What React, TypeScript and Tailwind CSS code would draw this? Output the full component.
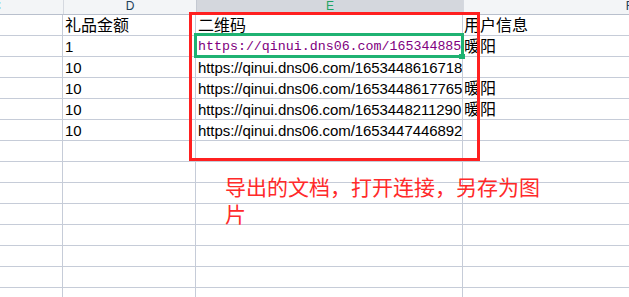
const rows: [string, string, string][] = [
  ['礼品金额', '二维码', '用户信息'],
  ['1', 'https://qinui.dns06.com/165344885', '暖阳'],
  ['10', 'https://qinui.dns06.com/1653448616718', ''],
  ['10', 'https://qinui.dns06.com/1653448617765', '暖阳'],
  ['10', 'https://qinui.dns06.com/1653448211290', '暖阳'],
  ['10', 'https://qinui.dns06.com/1653447446892', ''],
  ['', '', ''],
  ['', '', ''],
  ['', '', ''],
  ['', '', ''],
  ['', '', ''],
  ['', '', ''],
  ['', '', ''],
  ['', '', ''],
];

const isCjk = (s: string) => /[\u4e00-\u9fff]/.test(s);

export default function App() {
  return (
    <div
      className="relative w-[629px] h-[297px] overflow-hidden bg-white text-black"
      style={{ fontFamily: '"Liberation Sans", "Noto Sans CJK SC", sans-serif' }}
    >
      {/* column headers */}
      <div className="flex h-[15px] border-b border-[#b9c0cd] ml-[-70px] text-[12px] leading-[12px]">
        <div className="w-[133px] shrink-0 bg-[#f3f5f7] flex justify-center items-end pb-[2px] text-[#19a8c8]">C</div>
        <div className="w-[133px] shrink-0 bg-[#f3f5f7] border-l border-[#d5d9e0] flex justify-center items-end pb-[2px] text-[#20405a]">D</div>
        <div className="w-[267px] shrink-0 bg-[#d4d7dd] border-l border-[#c4c9d2] flex justify-center items-end pb-[2px] text-[#1fa463]">E</div>
        <div className="w-[332px] shrink-0 bg-[#f3f5f7] border-l border-[#d5d9e0] flex justify-center items-end pb-[2px] text-[#20405a]">F</div>
      </div>

      {/* cells */}
      {rows.map((r, i) => (
        <div key={i} className="flex h-[21px] border-b border-[#c6ccd8] ml-[-70px] text-[15px] leading-[17px]">
          <div className="w-[133px] shrink-0 border-r border-[#c6ccd8]" />
          <div className="w-[133px] shrink-0 border-r border-[#c6ccd8] flex items-end pl-[2px] pb-[1px] overflow-hidden whitespace-nowrap">
            <span className={isCjk(r[0]) ? 'text-[16px]' : ''}>{r[0]}</span>
          </div>
          <div className="w-[267px] shrink-0 border-r border-[#c6ccd8] flex items-end pl-[2px] pb-[1px] overflow-hidden whitespace-nowrap">
            {i === 1 ? (
              <span className="text-[13.3px] text-[#800080]" style={{ fontFamily: '"Liberation Mono", monospace' }}>
                {r[1]}
              </span>
            ) : (
              <span className={isCjk(r[1]) ? 'text-[16px]' : 'tracking-[-0.07px]'}>{r[1]}</span>
            )}
          </div>
          <div className="w-[332px] shrink-0 flex items-end pl-[1px] pb-[1px] whitespace-nowrap">
            <span className="text-[16px]">{r[2]}</span>
          </div>
        </div>
      ))}

      {/* active cell */}
      <div className="absolute left-[194px] top-[33px] w-[270px] h-[25px] border-[3px] border-[#1fb272]" />
      <div className="absolute left-[459px] top-[54px] w-[6px] h-[5px] bg-[#1fb272]" />

      {/* annotation */}
      <div className="absolute left-[189px] top-[12px] w-[291px] h-[149px] border-[3px] border-[#ff2020]" />
      <div
        className="absolute left-[225px] top-[173px] w-[322px] text-[21px] leading-[27px] text-[#ff2a2a]"
        style={{ fontFamily: '"Noto Sans CJK SC", sans-serif' }}
      >
        导出的文档，打开连接，另存为图片
      </div>
    </div>
  );
}
